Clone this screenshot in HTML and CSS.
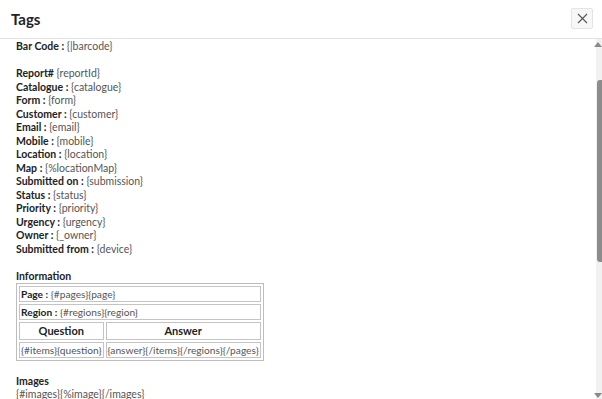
FILE: index.html
```html
<!DOCTYPE html>
<html lang="en">
<head>
    <meta charset="UTF-8">
    <meta name="viewport" content="width=device-width, initial-scale=1.0">
    <title>Tags</title>
    <link rel="stylesheet" href="styles.css">
</head>
<body>
    <div class="modal">
        <header class="modal-header">
            <h1>Tags</h1>
            <button class="close-btn" aria-label="Close">
                <svg width="11" height="11" viewBox="0 0 11 11"><path d="M1 1L10 10M10 1L1 10" stroke="#555" stroke-width="1.1" fill="none"/></svg>
            </button>
        </header>
        <div class="modal-body">
            <div class="content">
                <div class="line"><b>Bar Code :</b> {|barcode}</div>
                <div class="line">&nbsp;</div>
                <div class="line"><b>Report#</b> {reportId}</div>
                <div class="line"><b>Catalogue :</b> {catalogue}</div>
                <div class="line"><b>Form :</b> {form}</div>
                <div class="line"><b>Customer :</b> {customer}</div>
                <div class="line"><b>Email :</b> {email}</div>
                <div class="line"><b>Mobile :</b> {mobile}</div>
                <div class="line"><b>Location :</b> {location}</div>
                <div class="line"><b>Map :</b> {%locationMap}</div>
                <div class="line"><b>Submitted on :</b> {submission}</div>
                <div class="line"><b>Status :</b> {status}</div>
                <div class="line"><b>Priority :</b> {priority}</div>
                <div class="line"><b>Urgency :</b> {urgency}</div>
                <div class="line"><b>Owner :</b> {_owner}</div>
                <div class="line"><b>Submitted from :</b> {device}</div>
                <div class="line">&nbsp;</div>
                <div class="line"><b>Information</b></div>
                <table class="info-table">
                    <tr><td colspan="2"><b>Page :</b> {#pages}{page}</td></tr>
                    <tr><td colspan="2"><b>Region :</b> {#regions}{region}</td></tr>
                    <tr><th>Question</th><th>Answer</th></tr>
                    <tr><td>{#items}{question}</td><td>{answer}{/items}{/regions}{/pages}</td></tr>
                </table>
                <div class="line">&nbsp;</div>
                <div class="line"><b>Images</b></div>
                <div class="line">{#images}{%image}{/images}</div>
            </div>
            <div class="scrollbar">
                <span class="arrow-up"></span>
                <span class="thumb"></span>
                <span class="arrow-down"></span>
            </div>
        </div>
    </div>
</body>
</html>
```

FILE: styles.css
```css
body {
    margin: 0;
    padding: 0;
    background: #fff;
    font-family: Lato, "Open Sans", sans-serif;
    color: #555;
    overflow: hidden;
}
.modal {
    height: 399px;
    display: flex;
    flex-direction: column;
}
.modal-header {
    height: 38px;
    flex-shrink: 0;
    display: flex;
    align-items: center;
    justify-content: space-between;
    padding: 0 9px 0 11px;
    border-bottom: 1px solid #e3e3e3;
}
.modal-header h1 {
    margin: 0;
    font-size: 15px;
    font-weight: 700;
    color: #222;
}
.close-btn {
    width: 22px;
    height: 21px;
    padding: 0;
    display: flex;
    align-items: center;
    justify-content: center;
    background: #f7f7f7;
    border: 1px solid #e4e4e4;
    border-radius: 2px;
    margin-top: -1px;
}
.modal-body {
    flex: 1;
    display: flex;
    overflow: hidden;
}
.content {
    flex: 1;
    padding: 1px 0 0 16px;
    font-size: 10.5px;
    line-height: 13.5px;
}
.content b {
    color: #222;
    font-weight: 700;
}
.info-table {
    border: 1px solid #bdbdbd;
    border-spacing: 2px;
    font-size: 10.2px;
    line-height: 12px;
}
.info-table td, .info-table th {
    border: 1px solid #c4c4c4;
    padding: 1px 1px;
    text-align: left;
}
.info-table th {
    text-align: center;
    color: #222;
    font-size: 11px;
    line-height: 14px;
    padding: 1px 1px;
}
.scrollbar {
    width: 6px;
    flex-shrink: 0;
    background: #f1f1f1;
    position: relative;
}
.arrow-up {
    position: absolute;
    top: 3px;
    right: 0;
    border-left: 4px solid transparent;
    border-right: 4px solid transparent;
    border-bottom: 5px solid #8a8a8a;
}
.thumb {
    position: absolute;
    top: 41px;
    right: 0;
    width: 5px;
    height: 182px;
    background: #8c8c8c;
    border-radius: 3px 0 0 3px;
}
.arrow-down {
    position: absolute;
    bottom: 1px;
    right: 0;
    border-left: 4px solid transparent;
    border-right: 4px solid transparent;
    border-top: 5px solid #8a8a8a;
}
```
